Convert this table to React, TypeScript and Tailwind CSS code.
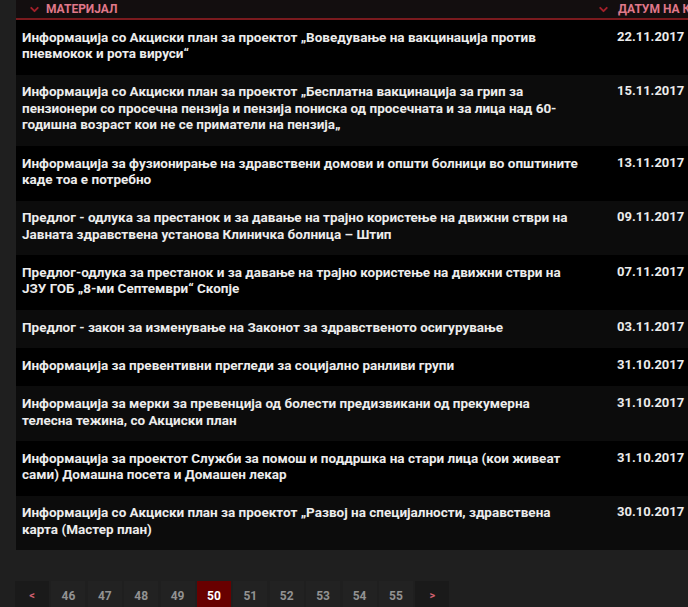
import { ChevronDown } from "lucide-react";

const rows = [
  {
    title:
      "Информација со Акциски план за проектот „Воведување на вакцинација против пневмокок и рота вируси“",
    date: "22.11.2017",
  },
  {
    title:
      "Информација со Акциски план за проектот „Бесплатна вакцинација за грип за пензионери со просечна пензија и пензија пониска од просечната и за лица над 60-годишна возраст кои не се приматели на пензија„",
    date: "15.11.2017",
  },
  {
    title:
      "Информација за фузионирање на здравствени домови и општи болници во општините каде тоа е потребно",
    date: "13.11.2017",
  },
  {
    title:
      "Предлог - одлука за престанок и за давање на трајно користење на движни стври на Јавната здравствена установа Клиничка болница – Штип",
    date: "09.11.2017",
  },
  {
    title:
      "Предлог-одлука за престанок и за давање на трајно користење на движни стври на ЈЗУ ГОБ „8-ми Септември“ Скопје",
    date: "07.11.2017",
  },
  {
    title: "Предлог - закон за изменување на Законот за здравственото осигурување",
    date: "03.11.2017",
  },
  {
    title: "Информација за превентивни прегледи за социјално ранливи групи",
    date: "31.10.2017",
  },
  {
    title:
      "Информација за мерки за превенција од болести предизвикани од прекумерна телесна тежина, со Акциски план",
    date: "31.10.2017",
  },
  {
    title:
      "Информација за проектот Служби за помош и поддршка на стари лица (кои живеат сами) Домашна посета и Домашен лекар",
    date: "31.10.2017",
  },
  {
    title:
      "Информација со Акциски план за проектот „Развој на специјалности, здравствена карта (Мастер план)",
    date: "30.10.2017",
  },
];

const pages = [46, 47, 48, 49, 50, 51, 52, 53, 54, 55];

export default function App() {
  return (
    <div className="w-[688px] h-[607px] overflow-hidden bg-[#1f1f1f] font-['Roboto',sans-serif]">
      <div className="ml-[16px] w-[720px]">
        {/* header */}
        <div className="grid grid-cols-[575px_1fr] h-[20px] bg-[#130e0f] border-b-2 border-[#7a1a1e] items-center">
          <div className="flex items-center gap-[5px] pl-[12px]">
            <ChevronDown size={13} strokeWidth={3.5} className="text-[#a3202a]" />
            <span className="text-[12px] font-bold uppercase text-[#e0788a] leading-none">
              Материјал
            </span>
          </div>
          <div className="flex items-center gap-[8px] pl-[6px]">
            <ChevronDown size={13} strokeWidth={3.5} className="text-[#a3202a]" />
            <span className="text-[12px] font-bold uppercase text-[#e0788a] leading-none whitespace-nowrap">
              Датум на креирање
            </span>
          </div>
        </div>

        {/* rows */}
        {rows.map((row, i) => (
          <div
            key={i}
            className={`grid grid-cols-[575px_1fr] ${i % 2 === 0 ? "bg-black" : "bg-[#0c0c0c]"}`}
          >
            <div className="pl-[6px] pr-[12px] pt-[8.7px] pb-[13px] text-[13.5px] leading-[16.5px] font-bold text-[#ececec]">
              {row.title}
            </div>
            <div className="pl-[26px] pt-[8.7px] pb-[13px] text-[13px] leading-[16.5px] font-bold text-[#ececec]">
              {row.date}
            </div>
          </div>
        ))}

        {/* pagination */}
        <div className="flex gap-[2.4px] mt-[31px] -ml-[1px]">
          <div className="w-[34px] h-[30px] flex items-center justify-center bg-[#1a1a1a] text-[#d06070] text-[11px] font-bold">
            &lt;
          </div>
          {pages.map((p) => (
            <div
              key={p}
              className={`w-[34px] h-[30px] flex items-center justify-center text-[12px] font-bold ${
                p === 50 ? "bg-[#680000] text-white" : "bg-[#222222] text-[#929292]"
              }`}
            >
              {p}
            </div>
          ))}
          <div className="w-[34px] h-[30px] flex items-center justify-center bg-[#1a1a1a] text-[#d06070] text-[11px] font-bold">
            &gt;
          </div>
        </div>
      </div>
    </div>
  );
}
